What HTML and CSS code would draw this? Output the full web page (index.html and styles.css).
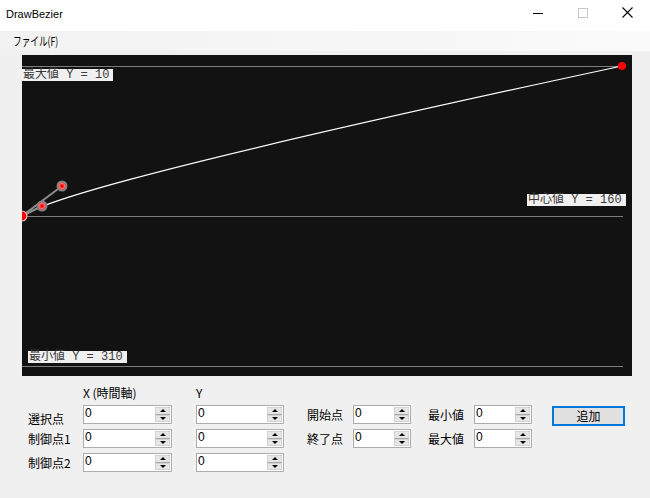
FILE: index.html
```html
<!DOCTYPE html>
<html lang="ja">
<head>
<meta charset="utf-8">
<title>DrawBezier</title>
<link rel="stylesheet" href="styles.css">
</head>
<body>
<div class="window">
  <div class="titlebar">
    <span class="title">DrawBezier</span>
    <div class="controls">
      <span class="ctl"><svg width="10" height="10" viewBox="0 0 10 10"><line x1="0" y1="5.5" x2="10" y2="5.5" stroke="#000" stroke-width="1"/></svg></span>
      <span class="ctl"><svg width="10" height="10" viewBox="0 0 10 10"><rect x="0.5" y="0.5" width="9" height="9" fill="none" stroke="#c8c8c8" stroke-width="1"/></svg></span>
      <span class="ctl"><svg width="11" height="11" viewBox="0 0 11 11"><path d="M0.5 0.5 L10.5 10.5 M10.5 0.5 L0.5 10.5" stroke="#000" stroke-width="1.1" fill="none"/></svg></span>
    </div>
  </div>
  <div class="menubar"><span class="menu-item">ファイル(F)</span></div>
  <div class="canvas">
    <svg class="plot" width="610" height="321" viewBox="0 0 610 321">
      <line x1="0" y1="11.5" x2="601" y2="11.5" stroke="#7c7c7c" stroke-width="1"/>
      <line x1="0" y1="161.5" x2="601" y2="161.5" stroke="#7c7c7c" stroke-width="1"/>
      <line x1="0" y1="311.5" x2="601" y2="311.5" stroke="#7c7c7c" stroke-width="1"/>
      <path d="M0 161 C20 151 40 131 600 11" fill="none" stroke="#ffffff" stroke-width="1.2"/>
      <line x1="0" y1="161" x2="20" y2="151" stroke="#8c8c8c" stroke-width="2"/>
      <line x1="0" y1="161" x2="40" y2="131" stroke="#8c8c8c" stroke-width="2"/>
      <g>
        <circle cx="20" cy="151" r="5.5" fill="#808080"/>
        <circle cx="20" cy="151" r="3.5" fill="#ff5c5c"/>
        <rect x="18.5" y="149.5" width="3" height="3" fill="#ff0000"/>
      </g>
      <g>
        <circle cx="40" cy="131" r="5.5" fill="#808080"/>
        <circle cx="40" cy="131" r="3.5" fill="#ff5c5c"/>
        <rect x="38.5" y="129.5" width="3" height="3" fill="#ff0000"/>
      </g>
      <circle cx="0" cy="161" r="5" fill="#ff0000" stroke="#f0b4b4" stroke-width="1.2"/>
      <circle cx="600" cy="11" r="4" fill="#ff0000"/>
    </svg>
    <span class="axis-label label-max">最大値 Y = 10</span>
    <span class="axis-label label-mid">中心値 Y = 160</span>
    <span class="axis-label label-min">最小値 Y = 310</span>
  </div>
  <div class="form">
    <span class="hdr c2">X (時間軸)</span>
    <span class="hdr c4">Y</span>

    <span class="lbl c1 lower">選択点</span>
    <div class="spin c2"><span class="val">0</span><span class="arrows"><span class="up"></span><span class="down"></span></span></div>
    <div class="spin c4"><span class="val">0</span><span class="arrows"><span class="up"></span><span class="down"></span></span></div>
    <span class="lbl c6">開始点</span>
    <div class="spin c7"><span class="val">0</span><span class="arrows"><span class="up"></span><span class="down"></span></span></div>
    <span class="lbl c9">最小値</span>
    <div class="spin c10"><span class="val">0</span><span class="arrows"><span class="up"></span><span class="down"></span></span></div>
    <button class="btn c12">追加</button>

    <span class="lbl c1">制御点1</span>
    <div class="spin c2"><span class="val">0</span><span class="arrows"><span class="up"></span><span class="down"></span></span></div>
    <div class="spin c4"><span class="val">0</span><span class="arrows"><span class="up"></span><span class="down"></span></span></div>
    <span class="lbl c6">終了点</span>
    <div class="spin c7"><span class="val">0</span><span class="arrows"><span class="up"></span><span class="down"></span></span></div>
    <span class="lbl c9">最大値</span>
    <div class="spin c10"><span class="val">0</span><span class="arrows"><span class="up"></span><span class="down"></span></span></div>

    <span class="lbl c1">制御点2</span>
    <div class="spin c2"><span class="val">0</span><span class="arrows"><span class="up"></span><span class="down"></span></span></div>
    <div class="spin c4"><span class="val">0</span><span class="arrows"><span class="up"></span><span class="down"></span></span></div>
  </div>
</div>
</body>
</html>
```
FILE: styles.css
```css
* { box-sizing: border-box; }
html, body { margin: 0; padding: 0; }
body {
  width: 650px;
  height: 498px;
  overflow: hidden;
  background: #f0f0f0;
  font-family: "Noto Sans CJK JP", "Liberation Sans", sans-serif;
  font-size: 12px;
  color: #000;
}
.window { width: 650px; height: 498px; background: #f0f0f0; }

.titlebar {
  height: 31px;
  background: #ffffff;
  display: flex;
  align-items: center;
  justify-content: space-between;
}
.title {
  font-family: "Liberation Sans", Arial, sans-serif;
  font-size: 11px;
  padding-left: 6px;
  margin-top: -3px;
  color: #000;
}
.controls { display: flex; height: 100%; }
.ctl {
  width: 45px;
  height: 100%;
  display: flex;
  align-items: center;
  justify-content: center;
  margin-top: -3px;
}

.menubar {
  height: 20px;
  background: linear-gradient(to right, #f2f2f2, #fafafa);
  display: flex;
  align-items: center;
}
.menu-item {
  display: inline-block;
  margin-left: 13px;
  font-family: "Noto Sans CJK JP", sans-serif;
  font-size: 12px;
  line-height: 14px;
  color: #000;
  transform: scaleX(0.72);
  transform-origin: left center;
}

.canvas {
  position: relative;
  margin: 4px 0 0 22px;
  width: 610px;
  height: 321px;
  background: #121212;
  overflow: hidden;
}
.plot { display: block; }
.axis-label {
  position: absolute;
  font-family: "Liberation Mono", "Noto Sans CJK JP", monospace;
  font-size: 12px;
  line-height: 12px;
  height: 12px;
  padding: 0 4px 0 1px;
  background: #f0f0f0;
  color: #3a3a3a;
  white-space: pre;
}
.label-max { left: 0; top: 14px; }
.label-mid { left: 505px; top: 139px; }
.label-min { left: 6px; top: 296px; }

.form {
  display: grid;
  grid-template-columns: 55px 89px 24px 88px 23px 46px 58px 17px 46px 58px 20px 73px;
  grid-template-rows: 14px 19px 19px 19px;
  row-gap: 5px;
  margin-top: 10px;
  padding-left: 28px;
  align-items: center;
}
.c1 { grid-column: 1; }
.c2 { grid-column: 2; }
.c4 { grid-column: 4; }
.c6 { grid-column: 6; }
.c7 { grid-column: 7; }
.c9 { grid-column: 9; }
.c10 { grid-column: 10; }
.c12 { grid-column: 12; }

.hdr, .lbl {
  font-size: 12px;
  line-height: 14px;
  white-space: nowrap;
  color: #000;
}
.lower { margin-top: 8px; }

.spin {
  height: 19px;
  border: 1px solid #adadad;
  background: #ffffff;
  display: flex;
  align-items: stretch;
}
.val {
  flex: 1;
  font-family: "Liberation Sans", sans-serif;
  font-size: 12px;
  line-height: 15px;
  padding-left: 1px;
}
.arrows {
  width: 15px;
  margin: 1px 1px 1px 0;
  display: flex;
  flex-direction: column;
  background: #e8e8e8;
}
.up, .down {
  flex: 1;
  position: relative;
  background: #e6e6e6;
  border: 1px solid #d4d4d4;
}
.up { border-bottom-color: #a6a6a6; }
.up::after, .down::after {
  content: "";
  position: absolute;
  left: 50%;
  top: 50%;
  margin-left: -3px;
  border-left: 3px solid transparent;
  border-right: 3px solid transparent;
}
.up::after { border-bottom: 3px solid #000; margin-top: -2px; }
.down::after { border-top: 3px solid #000; margin-top: -1px; }

.btn {
  height: 20px;
  align-self: start;
  margin-top: 1px;
  border: 2px solid #0078d7;
  background: #e1e1e1;
  font-family: "Noto Sans CJK JP", sans-serif;
  font-size: 12px;
  line-height: 14px;
  padding: 0;
  color: #000;
}
```
